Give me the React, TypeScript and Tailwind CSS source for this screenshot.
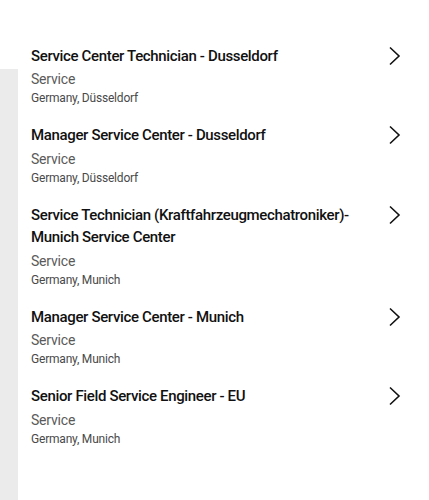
const jobs = [
  { title: "Service Center Technician - Dusseldorf", dept: "Service", loc: "Germany, Düsseldorf" },
  { title: "Manager Service Center - Dusseldorf", dept: "Service", loc: "Germany, Düsseldorf" },
  { title: "Service Technician (Kraftfahrzeugmechatroniker)-Munich Service Center", dept: "Service", loc: "Germany, Munich" },
  { title: "Manager Service Center - Munich", dept: "Service", loc: "Germany, Munich" },
  { title: "Senior Field Service Engineer - EU", dept: "Service", loc: "Germany, Munich" },
];

function Chevron() {
  return (
    <svg width="14" height="20" viewBox="0 0 14 20" fill="none" className="shrink-0 mt-[1px]">
      <path d="M2 1.5 L11 10 L2 18.5" stroke="#111" strokeWidth="1.6" />
    </svg>
  );
}

export default function App() {
  return (
    <div className="flex h-[500px] bg-white font-['Roboto',sans-serif] overflow-hidden">
      <div className="w-[18px] shrink-0 flex flex-col">
        <div className="h-[69px]" />
        <div className="flex-1 bg-[#ebebeb]" />
      </div>
      <div className="flex-1 pl-[13px] pr-[27px] pt-[44.5px]">
        {jobs.map((job) => (
          <div key={job.title} className="flex justify-between items-start pb-[17px]">
            <div className="max-w-[330px]">
              <div className="text-[15px] leading-[22.5px] font-medium text-[#111] tracking-[-0.35px]">{job.title}</div>
              <div className="mt-[2px] text-[14px] leading-[20px] text-[#5a5a5a] tracking-[-0.2px]">{job.dept}</div>
              <div className="text-[12px] leading-[18px] text-[#4a4a4a] tracking-[-0.2px]">{job.loc}</div>
            </div>
            <Chevron />
          </div>
        ))}
      </div>
    </div>
  );
}
